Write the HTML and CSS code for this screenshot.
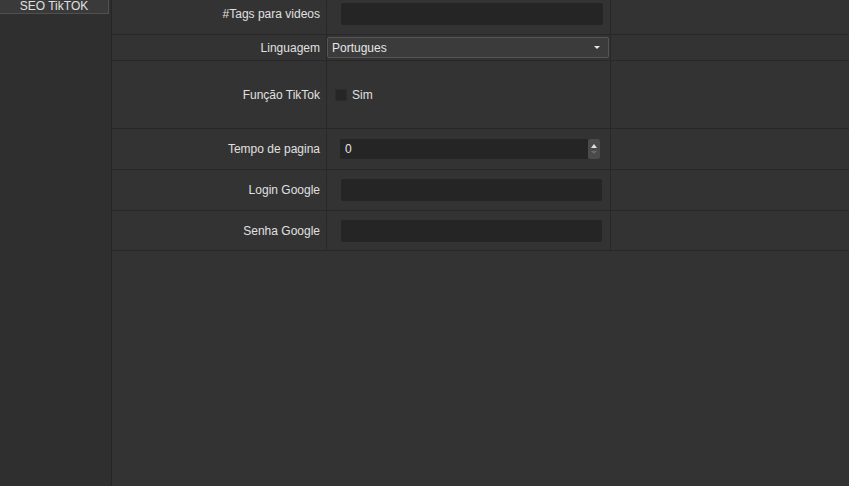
FILE: index.html
```html
<!DOCTYPE html>
<html lang="pt">
<head>
<meta charset="utf-8">
<title>SEO TikTOK</title>
<link rel="stylesheet" href="styles.css">
</head>
<body>
<div class="app">
  <aside class="sidebar">
    <div class="tab">SEO TikTOK</div>
  </aside>
  <main class="main">
    <div class="grid">
      <div class="cell label">#Tags para videos</div>
      <div class="cell value pad"><div class="field w262"></div></div>
      <div class="cell rest"></div>

      <div class="cell label">Linguagem</div>
      <div class="cell value">
        <div class="combo"><span>Portugues</span><span class="arrow"></span></div>
      </div>
      <div class="cell rest"></div>

      <div class="cell label">Função TikTok</div>
      <div class="cell value check-cell">
        <span class="checkbox"></span><span class="check-text">Sim</span>
      </div>
      <div class="cell rest"></div>

      <div class="cell label">Tempo de pagina</div>
      <div class="cell value pad2">
        <div class="spin">
          <span class="spin-val">0</span>
          <span class="spin-btns"><span class="up"></span><span class="down"></span></span>
        </div>
      </div>
      <div class="cell rest"></div>

      <div class="cell label">Login Google</div>
      <div class="cell value pad"><div class="field w261"></div></div>
      <div class="cell rest"></div>

      <div class="cell label">Senha Google</div>
      <div class="cell value pad"><div class="field w261"></div></div>
      <div class="cell rest"></div>
    </div>
  </main>
</div>
</body>
</html>
```
FILE: styles.css
```css
html, body {
  margin: 0;
  padding: 0;
  height: 100%;
  overflow: hidden;
  background: #333333;
  font-family: "Liberation Sans", Arial, sans-serif;
  font-size: 12px;
  color: #dcdcdc;
}
.app {
  display: flex;
  height: 486px;
}
.sidebar {
  width: 111px;
  flex: none;
  background: #2f2f2f;
  border-right: 1px solid #252525;
}
.tab {
  width: 108px;
  height: 13px;
  line-height: 12px;
  text-align: center;
  background: #3a3a3a;
  border-right: 1px solid #505050;
  border-bottom: 1px solid #505050;
  color: #e0e0e0;
  font-size: 12px;
}
.main {
  flex: 1;
  background: #333333;
  overflow: hidden;
}
.grid {
  display: grid;
  grid-template-columns: 215px 284px 1fr;
  grid-template-rows: 41px 26px 68px 41px 41px 40px;
  margin-top: -6px;
}
.cell {
  box-sizing: border-box;
  border-bottom: 1px solid #282828;
  display: flex;
  align-items: center;
}
.label {
  justify-content: flex-end;
  padding-right: 6px;
  border-right: 1px solid #282828;
  color: #e0e0e0;
}
.value {
  border-right: 1px solid #282828;
}
.pad { padding-left: 14px; }
.pad2 { padding-left: 13px; }
.field {
  height: 22px;
  background: #252525;
  border-radius: 2px;
}
.w262 { width: 262px; }
.w261 { width: 261px; }
.combo {
  box-sizing: border-box;
  width: 282px;
  height: 21px;
  background: #3b3b3b;
  border: 1px solid #555555;
  border-radius: 2px;
  display: flex;
  align-items: center;
  justify-content: space-between;
  padding: 0 8px 0 4px;
  color: #e6e6e6;
}
.arrow {
  width: 0;
  height: 0;
  border-left: 3px solid transparent;
  border-right: 3px solid transparent;
  border-top: 3px solid #e8e8e8;
}
.check-cell {
  padding-left: 8px;
}
.checkbox {
  box-sizing: border-box;
  width: 12px;
  height: 12px;
  background: #262626;
  border: 1px solid #2c2c2c;
}
.check-text {
  margin-left: 5px;
  color: #e0e0e0;
}
.spin {
  width: 260px;
  height: 20px;
  background: #252525;
  border-radius: 2px;
  display: flex;
  align-items: center;
  justify-content: space-between;
}
.spin-val {
  padding-left: 5px;
  color: #e6e6e6;
}
.spin-btns {
  width: 12px;
  height: 20px;
  background: #4a4a4a;
  border-radius: 2px;
  display: flex;
  flex-direction: column;
  align-items: center;
  justify-content: center;
  gap: 3px;
}
.up {
  width: 0;
  height: 0;
  border-left: 3px solid transparent;
  border-right: 3px solid transparent;
  border-bottom: 4px solid #e0e0e0;
}
.down {
  width: 0;
  height: 0;
  border-left: 3px solid transparent;
  border-right: 3px solid transparent;
  border-top: 3px solid #6a6a6a;
}
```
